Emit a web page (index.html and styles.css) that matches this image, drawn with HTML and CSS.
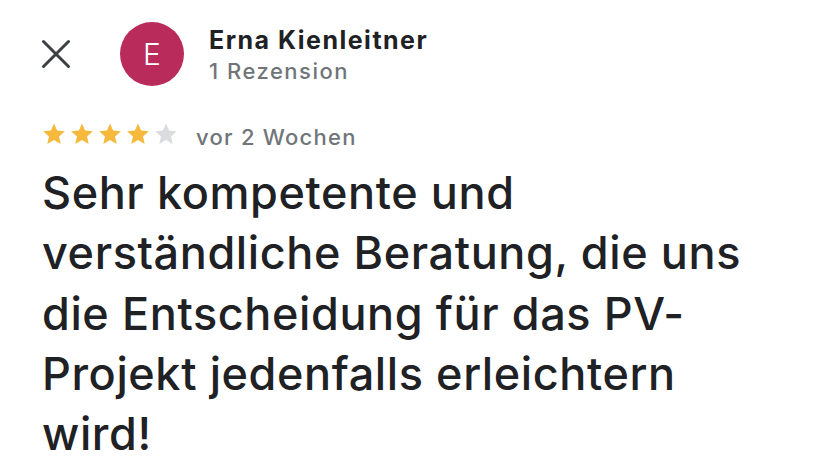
FILE: index.html
```html
<!DOCTYPE html>
<html lang="de">
<head>
<meta charset="utf-8">
<link rel="stylesheet" href="styles.css">
</head>
<body>
<div class="review">
  <div class="header">
    <button class="close" aria-label="Schließen">
      <svg width="30" height="30" viewBox="0 0 30 30"><path d="M2.5 2.5 L27.5 27.5 M27.5 2.5 L2.5 27.5" stroke="#3c4043" stroke-width="3" stroke-linecap="round"/></svg>
    </button>
    <div class="avatar">E</div>
    <div class="author">
      <div class="name">Erna Kienleitner</div>
      <div class="count">1 Rezension</div>
    </div>
  </div>
  <div class="meta">
    <div class="stars">
      <svg class="star on" viewBox="0 0 24 24"><path d="M12 1.5l3.1 7.1 7.7.7-5.8 5.1 1.7 7.6L12 18l-6.7 4 1.7-7.6-5.8-5.1 7.7-.7z"/></svg>
      <svg class="star on" viewBox="0 0 24 24"><path d="M12 1.5l3.1 7.1 7.7.7-5.8 5.1 1.7 7.6L12 18l-6.7 4 1.7-7.6-5.8-5.1 7.7-.7z"/></svg>
      <svg class="star on" viewBox="0 0 24 24"><path d="M12 1.5l3.1 7.1 7.7.7-5.8 5.1 1.7 7.6L12 18l-6.7 4 1.7-7.6-5.8-5.1 7.7-.7z"/></svg>
      <svg class="star on" viewBox="0 0 24 24"><path d="M12 1.5l3.1 7.1 7.7.7-5.8 5.1 1.7 7.6L12 18l-6.7 4 1.7-7.6-5.8-5.1 7.7-.7z"/></svg>
      <svg class="star off" viewBox="0 0 24 24"><path d="M12 1.5l3.1 7.1 7.7.7-5.8 5.1 1.7 7.6L12 18l-6.7 4 1.7-7.6-5.8-5.1 7.7-.7z"/></svg>
    </div>
    <span class="date">vor 2 Wochen</span>
  </div>
  <p class="text">Sehr kompetente und<br>verständliche Beratung, die uns<br>die Entscheidung für das PV-<br>Projekt jedenfalls erleichtern<br>wird!</p>
</div>
</body>
</html>
```
FILE: styles.css
```css
html, body {
  margin: 0;
  padding: 0;
  background: #fff;
}
body {
  font-family: Inter, "Liberation Sans", sans-serif;
  color: #202124;
  width: 828px;
  height: 475px;
  overflow: hidden;
}
.review {
  padding: 22px 0 0 41px;
}
.header {
  display: flex;
  align-items: center;
}
.close {
  border: 0;
  background: none;
  padding: 0;
  width: 30px;
  height: 30px;
  display: flex;
  margin-right: 49px;
}
.avatar {
  width: 64px;
  height: 64px;
  border-radius: 50%;
  background: #b92b5b;
  color: #fff;
  font-size: 30px;
  font-weight: 300;
  display: flex;
  align-items: center;
  justify-content: center;
  margin-right: 25px;
}
.author {
  display: flex;
  flex-direction: column;
  margin-top: 2px;
}
.name {
  font-size: 25px;
  font-weight: 700;
  line-height: 32px;
  letter-spacing: 1.5px;
}
.count {
  font-size: 22px;
  color: #70757a;
  font-weight: 500;
  line-height: 30px;
  letter-spacing: 1.5px;
}
.meta {
  display: flex;
  align-items: center;
  margin-top: 32px;
  padding-left: 1px;
}
.stars {
  display: flex;
  gap: 4px;
  margin-right: 18px;
}
.star {
  width: 24px;
  height: 24px;
}
.star.on { fill: #f6b93b; }
.star.off { fill: #dadce0; }
.date {
  font-size: 22px;
  line-height: 26px;
  padding-top: 6px;
  color: #70757a;
  font-weight: 500;
  letter-spacing: 1.25px;
}
.text {
  margin: 13px 0 0 1px;
  font-size: 45px;
  line-height: 60.25px;
  font-weight: 500;
  letter-spacing: 0.6px;
}
```
